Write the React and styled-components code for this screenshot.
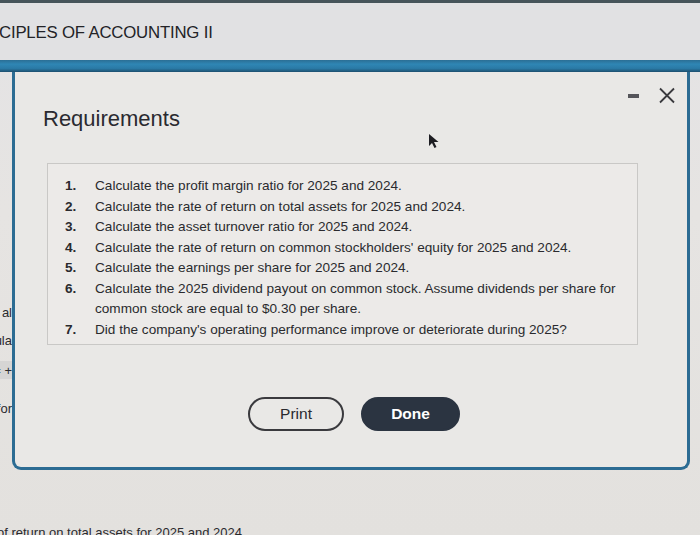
import React from 'react'
import styled, { createGlobalStyle } from 'styled-components'

const GlobalStyle = createGlobalStyle`
  html, body {
    margin: 0;
    padding: 0;
    background: #e3e1df;
  }
  body {
    font-family: "Liberation Sans", Arial, sans-serif;
    color: #26262a;
  }
`

const requirements = [
  { n: 1, text: 'Calculate the profit margin ratio for 2025 and 2024.' },
  { n: 2, text: 'Calculate the rate of return on total assets for 2025 and 2024.' },
  { n: 3, text: 'Calculate the asset turnover ratio for 2025 and 2024.' },
  { n: 4, text: "Calculate the rate of return on common stockholders' equity for 2025 and 2024." },
  { n: 5, text: 'Calculate the earnings per share for 2025 and 2024.' },
  {
    n: 6,
    text: 'Calculate the 2025 dividend payout on common stock. Assume dividends per share for',
    more: 'common stock are equal to $0.30 per share.',
  },
  { n: 7, text: "Did the company's operating performance improve or deteriorate during 2025?" },
]

// bits of the page behind the dialog, peeking out at the left edge
const leftBits = [
  { text: 'al', gap: 231 },
  { text: 'ula', gap: 10 },
  { text: '= +', gap: 12, shade: true },
  { text: 'for', gap: 20 },
]

const App = () => {
  return (
    <>
      <GlobalStyle />
      <Page>
        <TopStrip />
        <Header>
          <CourseTitle>CIPLES OF ACCOUNTING II</CourseTitle>
        </Header>
        <BlueBar />

        <Row>
          <Gutter>
            {leftBits.map((b, i) => (
              <Fragment key={i} gap={b.gap} shade={b.shade}>
                {b.text}
              </Fragment>
            ))}
          </Gutter>

          <Modal>
            <ModalHead>
              <Title>Requirements</Title>
              <WindowIcons>
                <Minimize />
                <svg width="18" height="17" viewBox="0 0 18 17">
                  <path d="M2 1.5 L16 15.5 M16 1.5 L2 15.5" stroke="#3a3a3e" strokeWidth="1.8" fill="none" />
                </svg>
              </WindowIcons>
            </ModalHead>

            <ReqBox>
              {requirements.map((r) => (
                <Item key={r.n}>
                  <Num>{r.n}.</Num>
                  <ItemText>
                    {r.text}
                    {r.more && (
                      <>
                        <br />
                        {r.more}
                      </>
                    )}
                  </ItemText>
                </Item>
              ))}
            </ReqBox>

            <Buttons>
              <Button>Print</Button>
              <Button primary>Done</Button>
            </Buttons>

            <Cursor width="12" height="16" viewBox="0 0 12 16">
              <path d="M1 1 L1 13 L4 10 L6.5 15 L8.5 14 L6 9 L10.5 9 Z" fill="#1d1d22" />
            </Cursor>
          </Modal>

          <RightGutter />
        </Row>

        <BottomLine>of return on total assets for 2025 and 2024.</BottomLine>
      </Page>
    </>
  )
}

const Page = styled.div`
  height: 535px;
  overflow: hidden;
  background: linear-gradient(180deg, #e4e3e5 0%, #e6e4e2 40%, #e3e1de 100%);
`

const TopStrip = styled.div`
  height: 3px;
  background: #46545a;
`

const Header = styled.div`
  height: 57px;
  display: flex;
  align-items: flex-start;
  padding-top: 20px;
  box-sizing: border-box;
  background: #e1e1e3;
`

const CourseTitle = styled.h1`
  margin: 0 0 0 -1px;
  font-size: 16.8px;
  font-weight: 400;
  letter-spacing: -0.2px;
  color: #232327;
`

const BlueBar = styled.div`
  height: 12px;
  background: linear-gradient(180deg, #2b6f95 0%, #2f86b4 35%, #2a7aa6 70%, #1d4f6e 100%);
`

const Row = styled.div`
  display: flex;
  align-items: flex-start;
`

const Gutter = styled.div`
  width: 12px;
  display: flex;
  flex-direction: column;
  flex-shrink: 0;
`

const Fragment = styled.div`
  margin-top: ${(p) => p.gap}px;
  height: 18px;
  display: flex;
  justify-content: flex-end;
  align-items: center;
  overflow: hidden;
  white-space: nowrap;
  font-size: 13px;
  color: #2a2a2e;
  background: ${(p) => (p.shade ? '#d6d5d4' : 'transparent')};
`

const Modal = styled.div`
  position: relative;
  flex: 1;
  height: 398px;
  box-sizing: border-box;
  border: 3px solid #2c6c93;
  border-top: none;
  border-radius: 0 0 9px 9px;
  background: #e9e8e6;
  padding: 0 0 0 27px;
  display: flex;
  flex-direction: column;
`

const ModalHead = styled.div`
  display: flex;
  justify-content: space-between;
  align-items: flex-start;
`

const Title = styled.h2`
  margin: 34px 0 0 1px;
  font-size: 22px;
  line-height: 26px;
  font-weight: 400;
  color: #2a2a30;
`

const WindowIcons = styled.div`
  display: flex;
  align-items: center;
  gap: 19px;
  margin: 15px 11px 0 0;
`

const Minimize = styled.span`
  display: block;
  width: 11px;
  height: 4px;
  background: #55555a;
`

const ReqBox = styled.div`
  margin: 31px 49px 0 5px;
  padding: 12px 10px 4px 17px;
  border: 1px solid #c9c8c6;
  background: #eceae8;
`

const Item = styled.div`
  display: flex;
  font-size: 13.6px;
  line-height: 20.5px;
  color: #2a2a2e;
`

const Num = styled.span`
  width: 30px;
  flex-shrink: 0;
  font-weight: 700;
`

const ItemText = styled.span`
  white-space: nowrap;
`

const Buttons = styled.div`
  display: flex;
  justify-content: center;
  gap: 17px;
  margin: 52px 0 0 -21px;
`

const Button = styled.button`
  height: 34px;
  width: ${(p) => (p.primary ? '99px' : '96px')};
  border-radius: 17px;
  border: 2px solid ${(p) => (p.primary ? '#2b3441' : '#3a3a3e')};
  background: ${(p) => (p.primary ? '#2b3441' : 'transparent')};
  color: ${(p) => (p.primary ? '#ffffff' : '#2a2a2e')};
  font-family: "Liberation Sans", Arial, sans-serif;
  font-size: 15.5px;
  font-weight: ${(p) => (p.primary ? 700 : 400)};
  cursor: pointer;
`

const Cursor = styled.svg`
  position: absolute;
  left: 413px;
  top: 61px;
`

const RightGutter = styled.div`
  width: 10px;
  flex-shrink: 0;
`

const BottomLine = styled.div`
  margin: 55px 0 0 -3px;
  font-size: 13px;
  white-space: nowrap;
  color: #2a2a2e;
`

export default App
